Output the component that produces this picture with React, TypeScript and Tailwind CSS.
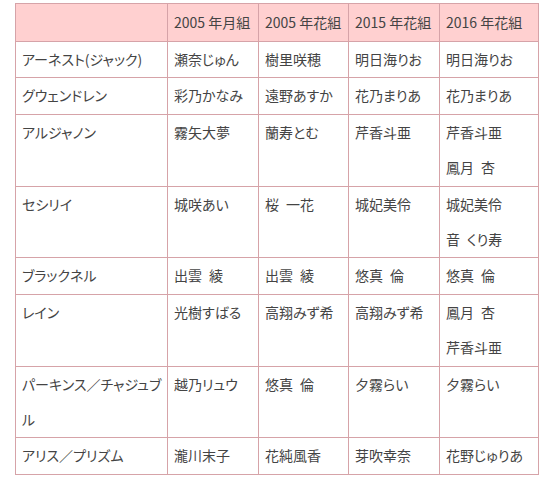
import React from 'react';

// --- Cast data ---
interface CastRow {
  role: string;
  cells: string[][];
}

const headers = ['2005 年月組', '2005 年花組', '2015 年花組', '2016 年花組'];

const rows: CastRow[] = [
  { role: 'アーネスト(ジャック)', cells: [['瀬奈じゅん'], ['樹里咲穂'], ['明日海りお'], ['明日海りお']] },
  { role: 'グウェンドレン', cells: [['彩乃かなみ'], ['遠野あすか'], ['花乃まりあ'], ['花乃まりあ']] },
  { role: 'アルジャノン', cells: [['霧矢大夢'], ['蘭寿とむ'], ['芹香斗亜'], ['芹香斗亜', '鳳月\u2002杏']] },
  { role: 'セシリイ', cells: [['城咲あい'], ['桜\u2002一花'], ['城妃美伶'], ['城妃美伶', '音\u2002くり寿']] },
  { role: 'ブラックネル', cells: [['出雲\u2002綾'], ['出雲\u2002綾'], ['悠真\u2002倫'], ['悠真\u2002倫']] },
  { role: 'レイン', cells: [['光樹すばる'], ['高翔みず希'], ['高翔みず希'], ['鳳月\u2002杏', '芹香斗亜']] },
  { role: 'パーキンス／チャジュブル', cells: [['越乃リュウ'], ['悠真\u2002倫'], ['夕霧らい'], ['夕霧らい']] },
  { role: 'アリス／プリズム', cells: [['瀧川末子'], ['花純風香'], ['芽吹幸奈'], ['花野じゅりあ']] },
];

const colWidths = ['w-[152px]', 'w-[91px]', 'w-[90px]', 'w-[91px]', 'w-[99px]'];

const cellBase =
  'border border-[#d6a3a8] pl-[6px] pr-[1px] py-0 align-top text-left font-normal leading-[35.4px]';

export default function App() {
  return (
    <div className="pl-[15px] pt-[3px] bg-white min-h-[488px] text-[14px] text-[#444444] font-['Noto_Sans_CJK_JP','Noto_Sans',sans-serif] [font-feature-settings:'palt']">
      <table className="border-collapse table-fixed w-[523px]">
        <colgroup>
          {colWidths.map((w, i) => (
            <col key={i} className={w} />
          ))}
        </colgroup>
        <thead>
          <tr className="bg-[#ffd0d0]">
            <th className={`${cellBase} leading-[37px]`} />
            {headers.map((h) => (
              <th key={h} className={`${cellBase} leading-[37px]`}>
                {h}
              </th>
            ))}
          </tr>
        </thead>
        <tbody>
          {rows.map((row) => (
            <tr key={row.role}>
              <td className={cellBase}>{row.role}</td>
              {row.cells.map((names, i) => (
                <td key={i} className={cellBase}>
                  {names.map((n) => (
                    <div key={n}>{n}</div>
                  ))}
                </td>
              ))}
            </tr>
          ))}
        </tbody>
      </table>
    </div>
  );
}
